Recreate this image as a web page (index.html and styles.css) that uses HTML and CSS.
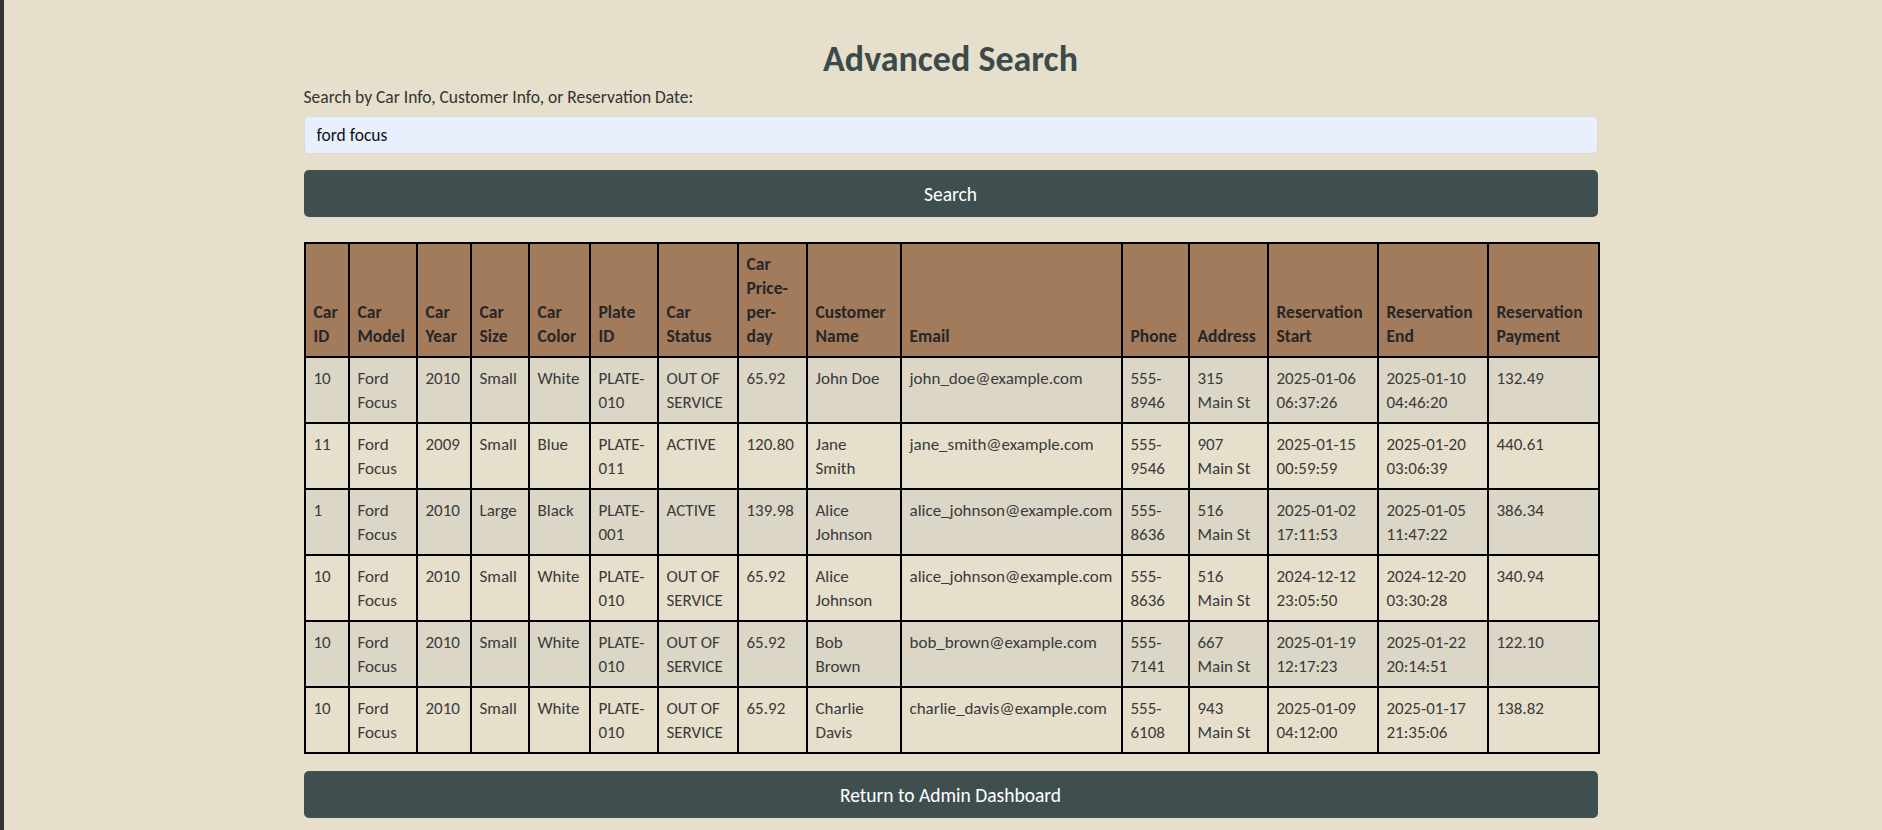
FILE: index.html
```html
<!DOCTYPE html>
<html lang="en">
<head>
<meta charset="utf-8">
<title>Advanced Search</title>
<link rel="stylesheet" href="styles.css">
</head>
<body>
<div class="frame">
  <main class="container">
    <h2 class="title">Advanced Search</h2>
    <form class="search-form">
      <label class="label" for="q">Search by Car Info, Customer Info, or Reservation Date:</label>
      <input class="field" id="q" type="text" value="ford focus">
      <button class="btn" type="button">Search</button>
    </form>
    <table class="results">
      <colgroup>
        <col class="c-id"><col class="c-model"><col class="c-year"><col class="c-size"><col class="c-color">
        <col class="c-plate"><col class="c-status"><col class="c-price"><col class="c-name"><col class="c-email">
        <col class="c-phone"><col class="c-addr"><col class="c-start"><col class="c-end"><col class="c-pay">
      </colgroup>
      <thead>
        <tr>
          <th>Car ID</th><th>Car Model</th><th>Car Year</th><th>Car Size</th><th>Car Color</th>
          <th>Plate ID</th><th>Car Status</th><th class="th-price">Car Price-per-day</th><th>Customer Name</th><th>Email</th>
          <th>Phone</th><th>Address</th><th>Reservation Start</th><th>Reservation End</th><th>Reservation Payment</th>
        </tr>
      </thead>
      <tbody>
        <tr>
          <td>10</td><td>Ford Focus</td><td>2010</td><td>Small</td><td>White</td><td>PLATE-010</td><td>OUT OF SERVICE</td><td>65.92</td><td class="td-name">John Doe</td><td>john_doe@example.com</td><td>555-8946</td><td>315 Main St</td><td>2025-01-06 06:37:26</td><td>2025-01-10 04:46:20</td><td>132.49</td>
        </tr>
        <tr>
          <td>11</td><td>Ford Focus</td><td>2009</td><td>Small</td><td>Blue</td><td>PLATE-011</td><td>ACTIVE</td><td>120.80</td><td class="td-name">Jane Smith</td><td>jane_smith@example.com</td><td>555-9546</td><td>907 Main St</td><td>2025-01-15 00:59:59</td><td>2025-01-20 03:06:39</td><td>440.61</td>
        </tr>
        <tr>
          <td>1</td><td>Ford Focus</td><td>2010</td><td>Large</td><td>Black</td><td>PLATE-001</td><td>ACTIVE</td><td>139.98</td><td class="td-name">Alice Johnson</td><td>alice_johnson@example.com</td><td>555-8636</td><td>516 Main St</td><td>2025-01-02 17:11:53</td><td>2025-01-05 11:47:22</td><td>386.34</td>
        </tr>
        <tr>
          <td>10</td><td>Ford Focus</td><td>2010</td><td>Small</td><td>White</td><td>PLATE-010</td><td>OUT OF SERVICE</td><td>65.92</td><td class="td-name">Alice Johnson</td><td>alice_johnson@example.com</td><td>555-8636</td><td>516 Main St</td><td>2024-12-12 23:05:50</td><td>2024-12-20 03:30:28</td><td>340.94</td>
        </tr>
        <tr>
          <td>10</td><td>Ford Focus</td><td>2010</td><td>Small</td><td>White</td><td>PLATE-010</td><td>OUT OF SERVICE</td><td>65.92</td><td class="td-name">Bob Brown</td><td>bob_brown@example.com</td><td>555-7141</td><td>667 Main St</td><td>2025-01-19 12:17:23</td><td>2025-01-22 20:14:51</td><td>122.10</td>
        </tr>
        <tr>
          <td>10</td><td>Ford Focus</td><td>2010</td><td>Small</td><td>White</td><td>PLATE-010</td><td>OUT OF SERVICE</td><td>65.92</td><td class="td-name">Charlie Davis</td><td>charlie_davis@example.com</td><td>555-6108</td><td>943 Main St</td><td>2025-01-09 04:12:00</td><td>2025-01-17 21:35:06</td><td>138.82</td>
        </tr>
      </tbody>
    </table>
    <button class="btn btn-return" type="button">Return to Admin Dashboard</button>
  </main>
</div>
</body>
</html>
```
FILE: styles.css
```css
* { box-sizing: border-box; }

html, body {
  margin: 0;
  padding: 0;
  height: 100%;
}

body {
  background: #e5dfcb;
  font-family: Carlito, Lato, "Liberation Sans", sans-serif;
  font-size: 17px;
  line-height: 24px;
  color: #333333;
  border-left: 4px solid #343434;
  overflow: hidden;
}

.frame {
  padding-left: 15px;
}

.container {
  width: 1294px;
  margin: 0 auto;
  padding-top: 38px;
}

.title {
  margin: 0 0 4px;
  text-align: center;
  font-size: 36px;
  line-height: 43px;
  font-weight: 700;
  color: #3d4a4a;
}

.search-form {
  display: flex;
  flex-direction: column;
}

.label {
  font-size: 17.5px;
  line-height: 24px;
  color: #333;
  margin-bottom: 7px;
}

.field {
  height: 38px;
  padding: 6px 12px;
  border: 1px solid #dcdccf;
  border-radius: 5px;
  background: #e8f0fe;
  font-family: inherit;
  font-size: 17.5px;
  color: #111;
  outline: none;
}

.btn {
  height: 47px;
  border: none;
  border-radius: 5px;
  background: #3f4f4f;
  color: #ffffff;
  font-family: inherit;
  font-size: 19.5px;
  width: 100%;
  display: block;
}

.search-form .btn {
  margin-top: 16px;
}

.results {
  width: 1294px;
  margin-top: 25px;
  border-collapse: collapse;
  table-layout: fixed;
  border: 2px solid #000;
}

.results th,
.results td {
  border: 2px solid #000;
  padding: 8px;
  text-align: left;
  line-height: 24px;
}

.results th {
  background: #a27a5c;
  color: #262626;
  font-weight: 700;
  font-size: 17.5px;
  vertical-align: bottom;
}

.results .th-price {
  padding-right: 19px;
}

.results td {
  vertical-align: top;
  color: #3a3a3a;
  font-size: 17px;
  padding-top: 9px;
  padding-bottom: 7px;
}

.results .td-name {
  padding-right: 14px;
}

.results tbody tr:nth-child(odd) td {
  background: #dbd6c5;
}

.results tbody tr:nth-child(even) td {
  background: #e6dfcc;
}

.c-id { width: 44px; }
.c-model { width: 68px; }
.c-year { width: 54px; }
.c-size { width: 58px; }
.c-color { width: 61px; }
.c-plate { width: 68px; }
.c-status { width: 80px; }
.c-price { width: 69px; }
.c-name { width: 94px; }
.c-email { width: 221px; }
.c-phone { width: 67px; }
.c-addr { width: 79px; }
.c-start { width: 110px; }
.c-end { width: 110px; }
.c-pay { width: 111px; }

.btn-return {
  margin-top: 17px;
}
```
